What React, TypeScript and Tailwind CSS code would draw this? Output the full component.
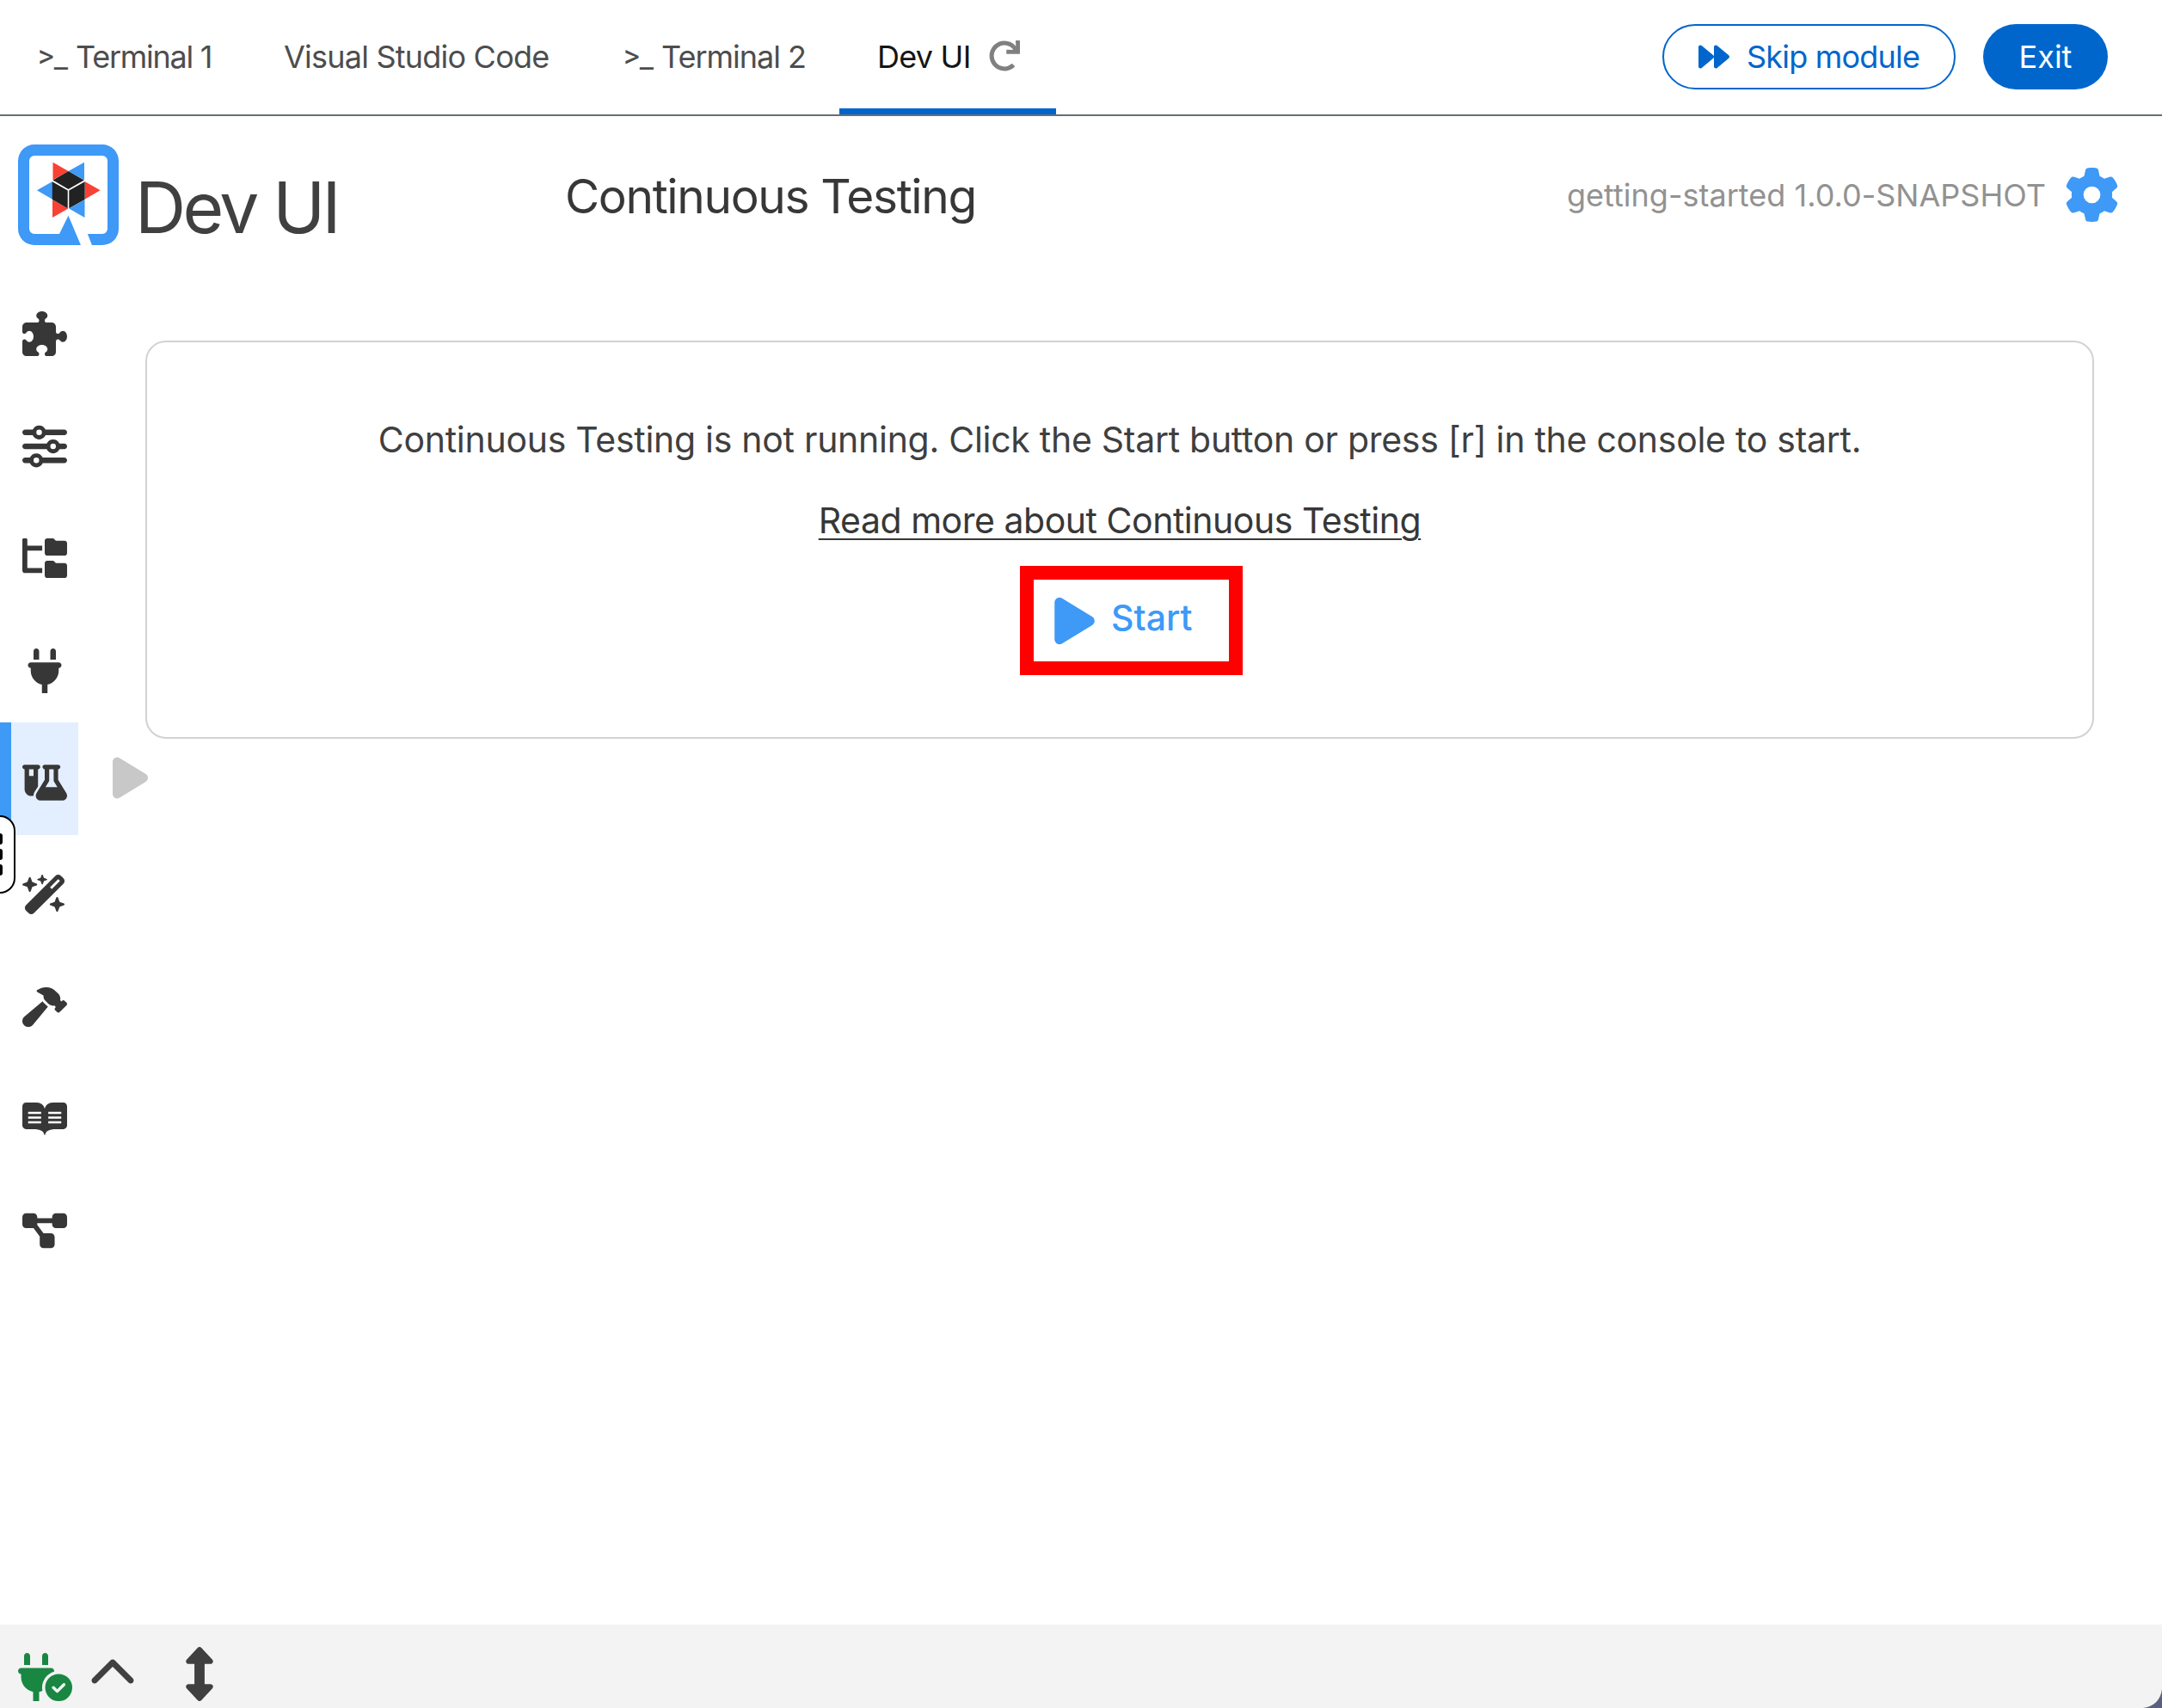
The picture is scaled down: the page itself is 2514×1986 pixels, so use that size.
import React from 'react';
import {
  FaPuzzlePiece,
  FaSliders,
  FaFlaskVial,
  FaWandMagicSparkles,
  FaHammer,
  FaReadme,
  FaDiagramProject,
  FaChevronUp,
  FaUpDown,
  FaGear,
  FaPlay,
} from 'react-icons/fa6';
import { FaRedo, FaForward } from 'react-icons/fa';

type IconProps = { className?: string };

function PlugIcon({ className }: IconProps) {
  return (
    <svg viewBox="0 0 384 512" fill="currentColor" className={className}>
      <path d="M96 0C78.3 0 64 14.3 64 32v96h64V32c0-17.7-14.3-32-32-32zM288 0c-17.7 0-32 14.3-32 32v96h64V32c0-17.7-14.3-32-32-32zM32 160c-17.7 0-32 14.3-32 32s14.3 32 32 32v32c0 77.4 55 142 128 156.8V512h64V412.8C297 398 352 333.4 352 256V224c17.7 0 32-14.3 32-32s-14.3-32-32-32H32z" />
    </svg>
  );
}

function PlugCheckIcon({ className }: IconProps) {
  return (
    <svg viewBox="0 0 576 512" fill="currentColor" className={className}>
      <path d="M96 0C78.3 0 64 14.3 64 32v96h64V32c0-17.7-14.3-32-32-32zM288 0c-17.7 0-32 14.3-32 32v96h64V32c0-17.7-14.3-32-32-32zM32 160c-17.7 0-32 14.3-32 32s14.3 32 32 32v32c0 77.4 55 142 128 156.8V512h64V412.8c12.3-2.5 24.1-6.4 35.1-11.5c-2.1-10.8-3.1-21.9-3.1-33.3c0-80.3 53.8-148 127.3-169.2c.5-2.2 .7-4.5 .7-6.8c0-17.7-14.3-32-32-32H32zM576 368a144 144 0 1 0 -288 0 144 144 0 1 0 288 0zm-76.7-43.3c6.2 6.2 6.2 16.4 0 22.6l-72 72c-6.2 6.2-16.4 6.2-22.6 0l-40-40c-6.2-6.2-6.2-16.4 0-22.6s16.4-6.2 22.6 0L416 385.4l60.7-60.7c6.2-6.2 16.4-6.2 22.6 0z" />
    </svg>
  );
}

function FolderTreeIcon({ className }: IconProps) {
  return (
    <svg viewBox="0 0 576 512" fill="currentColor" className={className}>
      <path d="M544 32h-112l-32-32H320c-17.62 0-32 14.38-32 32v160c0 17.62 14.38 32 32 32h224c17.62 0 32-14.38 32-32V64C576 46.38 561.6 32 544 32zM544 320h-112l-32-32H320c-17.62 0-32 14.38-32 32v160c0 17.62 14.38 32 32 32h224c17.62 0 32-14.38 32-32v-128C576 334.4 561.6 320 544 320zM64 16C64 7.125 56.88 0 48 0h-32C7.125 0 0 7.125 0 16V416c0 17.62 14.38 32 32 32h224v-64H64V160h192V96H64V16z" />
    </svg>
  );
}

const navItems = [
  { label: 'Extensions', Icon: FaPuzzlePiece },
  { label: 'Configuration', Icon: FaSliders },
  { label: 'Workspace', Icon: FolderTreeIcon },
  { label: 'Dev Services', Icon: PlugIcon },
  { label: 'Continuous Testing', Icon: FaFlaskVial, active: true },
  { label: 'Assistant', Icon: FaWandMagicSparkles },
  { label: 'Build Metrics', Icon: FaHammer },
  { label: 'Readme', Icon: FaReadme },
  { label: 'Dependencies', Icon: FaDiagramProject },
];

function QuarkusLogo() {
  return (
    <svg viewBox="0 0 117 117" className="h-[117px] w-[117px] shrink-0">
      <path
        fill="#3e99f7"
        fillRule="evenodd"
        d="M19 0H98A19 19 0 0 1 117 19V98A19 19 0 0 1 98 117H85.9L80.9 104H98A6 6 0 0 0 104 98V19A6 6 0 0 0 98 13H19A6 6 0 0 0 13 19V98A6 6 0 0 0 19 104H48L58.5 82.7L72.9 117H19A19 19 0 0 1 0 98V19A19 19 0 0 1 19 0Z"
      />
      <path fill="#f94134" d="M40.5 20.7V41.3L58.5 31ZM95.6 53.3L77.6 43V63.8ZM40 64.3V84.9L58.2 74.6Z" />
      <path fill="#3e99f7" d="M77 20.7V41.3L58.5 31ZM21.9 53.3L40 43V63.8ZM77.5 64.3V84.9L59.2 74.6Z" />
      <path
        fill="#222"
        d="M58.5 31L76.8 41.5L58.5 52L40.5 41.5ZM39.8 43.2L57.7 53.6V74.2L39.8 64ZM77.6 43.2L59.3 53.6V74.2L77.6 64Z"
      />
    </svg>
  );
}

function TopBar() {
  return (
    <header className="flex h-[135px] shrink-0 items-center justify-between border-b-2 border-[#6a6e73] pr-[63px] text-[36px] leading-none whitespace-nowrap text-[#4d4d4d]">
      <div className="flex h-full">
        <div className="flex w-[289px] items-center pb-[2px] pl-[44px]">
          <span className="w-[44px] font-[Roboto,sans-serif]">&gt;_</span>
          <span className="tracking-[-1.25px]">Terminal 1</span>
        </div>
        <div className="flex w-[392px] items-center pb-[2px] pl-[41px] tracking-[-0.78px]">Visual Studio Code</div>
        <div className="flex w-[295px] items-center pb-[2px] pl-[44px]">
          <span className="w-[44px] font-[Roboto,sans-serif]">&gt;_</span>
          <span className="tracking-[-1px]">Terminal 2</span>
        </div>
        <div className="flex w-[252px] items-center border-b-[7px] border-[#0066cc] pt-[5px] pl-[44px] text-[#151515]">
          <span className="w-[130px] tracking-[-0.75px]">Dev UI</span>
          <FaRedo size={36} className="mb-[1px] text-[#808080]" />
        </div>
      </div>
      <div className="flex items-center pb-px">
        <button className="flex h-[76px] w-[341px] items-center rounded-full border-2 border-[#0066cc] pb-px pl-[40px] tracking-[-0.8px] text-[#0066cc]">
          <FaForward size={36} className="mr-[20px]" />
          Skip module
        </button>
        <button className="ml-[32px] flex h-[76px] w-[145px] items-center justify-center rounded-full bg-[#0066cc] pb-px text-white">
          Exit
        </button>
      </div>
    </header>
  );
}

function DevUiHeader() {
  return (
    <div className="flex h-[183px] shrink-0 items-center pr-[50px] pl-[21px] leading-none whitespace-nowrap">
      <QuarkusLogo />
      <span className="mt-[31px] ml-[19px] w-[498px] text-[82px] tracking-[-3.6px] text-[#404040]">Dev UI</span>
      <h1 className="mt-[4px] grow pl-[2px] text-[55px] font-normal tracking-[-1.33px] text-[#373737]">Continuous Testing</h1>
      <span className="mr-[22px] text-[36px] tracking-[0.02px] text-[#929292]">getting-started 1.0.0-SNAPSHOT</span>
      <FaGear size={63} className="text-[#3e99f7]" />
    </div>
  );
}

function SideNav() {
  return (
    <nav className="flex w-[91px] shrink-0 flex-col pt-px">
      {navItems.map(({ label, Icon, active }) => (
        <a
          key={label}
          aria-label={label}
          className={
            active
              ? 'flex h-[130.35px] items-center border-l-[13px] border-[#3e99f7] bg-[#e3effe] pt-[8.6px] pl-[13px] text-[#373737]'
              : 'flex h-[130.35px] items-center pt-[8.6px] pl-[26px] text-[#373737]'
          }
        >
          <Icon className="h-[52px] w-[52px]" />
        </a>
      ))}
    </nav>
  );
}

function DragHandle() {
  return (
    <div className="absolute top-[948px] left-[-22px] flex h-[91px] w-[40px] flex-col items-end justify-center gap-[5px] rounded-[18px] border-2 border-black bg-white pr-[13px]">
      <span className="h-[13px] w-[13px] rounded-[3px] bg-black" />
      <span className="h-[13px] w-[13px] rounded-[3px] bg-black" />
      <span className="h-[13px] w-[13px] rounded-[3px] bg-black" />
    </div>
  );
}

function TestingPanel() {
  return (
    <main className="flex flex-1 flex-col items-start pt-[78px] text-[41px] leading-[48px] whitespace-nowrap text-[#3f3f3f]">
      <section className="ml-[78px] flex h-[463px] w-[2266px] flex-col items-center rounded-[24px] border-2 border-[#d2d2d2] pt-[89px]">
        <p className="tracking-[-0.28px]">
          Continuous Testing is not running. Click the Start button or press [r] in the console to start.
        </p>
        <a className="mt-[46px] tracking-[-0.47px] text-[#373737] underline decoration-2 underline-offset-[6px]">
          Read more about Continuous Testing
        </a>
        <div className="mt-[29px] ml-[27px] flex h-[127px] w-[259px] items-center border-[16px] border-[#ff0000] pl-[24px] font-medium text-[#3e99f7]">
          <FaPlay className="h-[62px] w-[47px]" />
          <span className="mb-[7px] ml-[19px]">Start</span>
        </div>
      </section>
      <FaPlay className="mt-[18px] ml-[40px] h-[55px] w-[41px] text-[#c8c8c8]" />
    </main>
  );
}

function Footer() {
  return (
    <footer className="flex h-[97px] shrink-0 items-center bg-[#f3f3f3] pt-[18px] pl-[21px] text-[#404040]">
      <PlugCheckIcon className="mt-[7px] h-[56px] w-[63px] text-[#198742]" />
      <FaChevronUp size={56} className="ml-[19px]" />
      <FaUpDown className="ml-[57px] h-[63px] w-[32px]" />
    </footer>
  );
}

export default function App() {
  return (
    <div className="relative flex h-[1986px] w-[2514px] flex-col overflow-hidden bg-white font-[Inter,sans-serif]">
      <TopBar />
      <DevUiHeader />
      <div className="flex min-h-0 flex-1">
        <SideNav />
        <TestingPanel />
      </div>
      <Footer />
      <DragHandle />
      <svg viewBox="0 0 22 22" className="absolute right-0 bottom-0 h-[22px] w-[22px]">
        <path fill="#5c6080" d="M22 0V22H0C12 21 21 12 22 0Z" />
      </svg>
    </div>
  );
}
